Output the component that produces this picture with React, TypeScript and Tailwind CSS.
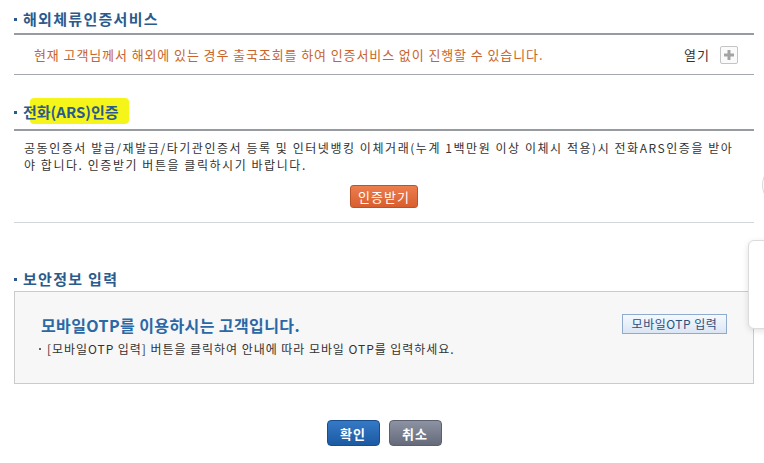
import React from "react";

const font = { fontFamily: '"Noto Sans CJK KR", "Noto Sans", sans-serif' };

function Title({ children }: { children: React.ReactNode }) {
  return (
    <div className="flex items-center gap-[6px] h-[20px]">
      <span className="w-[3px] h-[3px] bg-[#2b5b8c]" />
      <h2 className="text-[15px] font-bold text-[#2b5b8c] leading-[20px] tracking-[1.3px]">{children}</h2>
    </div>
  );
}

export default function App() {
  return (
    <div className="relative w-[764px] h-[463px] bg-white overflow-hidden text-[#333]" style={font}>
      <div className="ml-[14px] w-[740px]">
        {/* 해외체류 */}
        <div className="pt-[9px]">
          <Title>해외체류인증서비스</Title>
          <div className="mt-[4px] h-[2px] bg-[#979ca3]" />
          <div className="flex items-center justify-between h-[39px] pl-[20px] pr-[16px]">
            <p className="text-[13px] text-[#c8642c] tracking-[0.9px]">
              현재 고객님께서 해외에 있는 경우 출국조회를 하여 인증서비스 없이 진행할 수 있습니다.
            </p>
            <div className="flex items-center gap-[10px]">
              <span className="text-[13px] text-[#333] tracking-[1px]">열기</span>
              <span className="w-[18px] h-[18px] border border-[#c4c4c4] rounded-[2px] bg-[#fafafa] flex items-center justify-center">
                <svg width="10" height="10" viewBox="0 0 10 10">
                  <rect x="3.5" y="0" width="3" height="10" fill="#a3a3a3" />
                  <rect x="0" y="3.5" width="10" height="3" fill="#a3a3a3" />
                </svg>
              </span>
            </div>
          </div>
          <div className="h-px bg-[#a4a8ae]" />
        </div>

        {/* 전화(ARS)인증 */}
        <div className="pt-[27px]">
          <div className="flex items-center gap-[6px] h-[20px]">
            <span className="w-[3px] h-[3px] bg-[#2b5b8c]" />
            <h2 className="relative text-[15px] font-bold text-[#2b5b8c] leading-[20px]">
              <span className="absolute left-[7px] -top-[4px] w-[99px] h-[26px] bg-[#f4f400] rounded-[4px] opacity-90" />
              <span className="relative">전화(ARS)인증</span>
            </h2>
          </div>
          <div className="mt-[7px] h-[2px] bg-[#979ca3]" />
          <div className="pl-[10px] pt-[8px] text-[12px] leading-[17px] text-[#333] tracking-[1.55px]">
            <p className="whitespace-nowrap">
              공동인증서 발급/재발급/타기관인증서 등록 및 인터넷뱅킹 이체거래(누계 1백만원 이상 이체시 적용)시 전화ARS인증을 받아
            </p>
            <p className="whitespace-nowrap">야 합니다. 인증받기 버튼을 클릭하시기 바랍니다.</p>
          </div>
          <div className="flex justify-center pt-[12px] pb-[14px]">
            <button className="w-[68px] h-[23px] rounded-[3px] border border-[#b9542a] bg-gradient-to-b from-[#ec7d4d] to-[#d95e2d] text-white text-[13px] tracking-[1px] leading-none">
              인증받기
            </button>
          </div>
          <div className="h-px bg-[#d3d6da]" />
        </div>

        {/* 보안정보 입력 */}
        <div className="pt-[46px]">
          <Title>보안정보 입력</Title>
          <div className="mt-[2px] h-[93px] border border-[#cbcbcb] bg-[#f7f7f7] pl-[26px] pr-[26px] pt-[20px]">
            <div className="flex items-center justify-between">
              <p className="text-[16px] font-bold text-[#2a68a6] leading-[20px] mt-[3px] tracking-[0.4px]">
                모바일OTP를 이용하시는 고객입니다.
              </p>
              <button className="w-[105px] h-[20px] border border-[#8eaacd] bg-gradient-to-b from-[#f6f9fd] to-[#dbe6f4] text-[12px] text-[#2d4f7c] tracking-[0.5px] leading-none">
                모바일OTP 입력
              </button>
            </div>
            <p className="mt-[5px] text-[12px] text-[#333] leading-[17px] flex items-center gap-[6px] -ml-[2px] tracking-[0.95px]">
              <span className="w-[2px] h-[2px] bg-[#666]" />
              [모바일OTP 입력] 버튼을 클릭하여 안내에 따라 모바일 OTP를 입력하세요.
            </p>
          </div>
        </div>

        {/* buttons */}
        <div className="flex justify-center gap-[9px] pt-[36px]">
          <button className="w-[53px] h-[26px] rounded-[4px] border border-[#1a4d8e] bg-gradient-to-b from-[#3579c6] to-[#1c5aa3] text-white text-[13px] font-bold tracking-[1px] leading-none">
            확인
          </button>
          <button className="w-[53px] h-[26px] rounded-[4px] border border-[#5b6070] bg-gradient-to-b from-[#8d93a3] to-[#656b7b] text-white text-[13px] font-bold tracking-[1px] leading-none">
            취소
          </button>
        </div>
      </div>

      {/* floating quick menu edges */}
      <div className="absolute left-[762px] top-[163px] w-[44px] h-[44px] rounded-full border border-[#d8d8d8] bg-white" />
      <div className="absolute left-[748px] top-[240px] w-[40px] h-[89px] rounded-[6px] border border-[#dcdcdc] bg-white shadow-[0_2px_6px_rgba(0,0,0,0.12)]" />
    </div>
  );
}
